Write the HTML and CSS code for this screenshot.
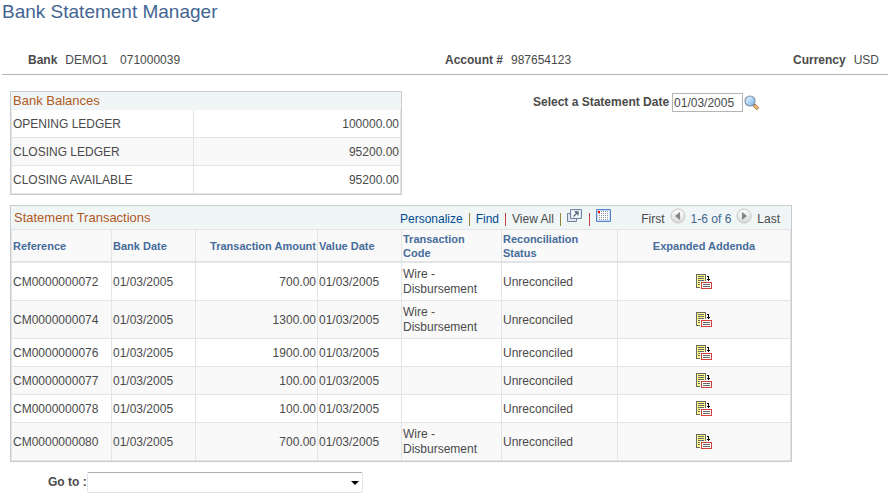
FILE: index.html
```html
<!DOCTYPE html>
<html lang="en">
<head>
<meta charset="utf-8">
<title>Bank Statement Manager</title>
<link rel="stylesheet" href="styles.css">
</head>
<body>
<svg class="sprite" aria-hidden="true">
  <symbol id="addenda" viewBox="0 0 16 16">
    <path fill="#666" d="M0 0h10v14H0z"/>
    <path fill="#ff8" d="M1 1h8v12H1z"/>
    <path fill="#666" d="M2 2h6v1H2zM2 4h6v1H2zM2 6h6v1H2zM2 8h3v1H2zM2 10h2v1H2z"/>
    <path fill="#000" d="M11 2h2v1h-2zM12 2h1v4h-1zM11 5h3v1h-3zM12 6h1v1h-1z"/>
    <path fill="#fff" d="M4 7h12v8H4z"/>
    <path fill="#d04040" d="M5 8h11v7H5z"/>
    <path fill="#fff" d="M6 9h9v5H6z"/>
    <path fill="#666" d="M7 10h7v1H7zM7 12h7v1H7z"/>
  </symbol>
</svg>
<main>
  <h1>Bank Statement Manager</h1>

  <dl class="summary">
    <div><dt>Bank</dt><dd>DEMO1</dd><dd class="routing">071000039</dd></div>
    <div><dt>Account #</dt><dd>987654123</dd></div>
    <div class="currency"><dt>Currency</dt><dd>USD</dd></div>
  </dl>

  <div class="top">
    <section class="panel balances">
      <h2>Bank Balances</h2>
      <table>
        <colgroup><col class="c-label"><col></colgroup>
        <tbody>
          <tr><td>OPENING LEDGER</td><td class="num">100000.00</td></tr>
          <tr><td>CLOSING LEDGER</td><td class="num">95200.00</td></tr>
          <tr><td>CLOSING AVAILABLE</td><td class="num">95200.00</td></tr>
        </tbody>
      </table>
    </section>
    <form class="picker">
      <label for="date">Select a Statement Date</label>
      <input id="date" type="text" value="01/03/2005">
      <button type="button" class="icon" aria-label="Look up date">
        <svg width="16" height="16" viewBox="0 0 16 16">
          <defs><linearGradient id="lens" x2="1" y2="1"><stop offset="0" stop-color="#f2fbff"/><stop offset="1" stop-color="#6fb4ee"/></linearGradient></defs>
          <path d="M9 9l1.500 1.500" stroke="#777" stroke-width="2"/>
          <path d="M10 10l4 4" stroke="#a8763f" stroke-width="3.600"/>
          <path d="M10.500 10.500l3 3" stroke="#f0b878" stroke-width="2.200"/>
          <circle cx="6" cy="6" r="5" fill="url(#lens)" stroke="#8593a8" stroke-width="1.200"/>
        </svg>
      </button>
    </form>
  </div>

  <section class="panel transactions">
    <div class="bar">
      <h2>Statement Transactions</h2>
      <div class="tools">
        <a href="#">Personalize</a><i></i><a href="#">Find</a><i class="red"></i><span>View All</span><i></i>
        <button type="button" class="icon" aria-label="Zoom grid">
          <svg width="16" height="14" viewBox="0 0 16 14">
            <path d="M.5 4.500h9v8h-9z" fill="#dfe5ea" stroke="#6f8193"/>
            <path d="M3.500 .5h11v9h-11z" fill="#fff" stroke="#7187a5"/>
            <path d="M4.500 1.500h9v7h-9z" fill="none" stroke="#dce8f5"/>
            <path d="M6.500 7.500l4-4M7.500 3h3.500v3.500" fill="none" stroke="#556879" stroke-width="1.300"/>
          </svg>
        </button><i class="red"></i>
        <button type="button" class="icon" aria-label="Download to spreadsheet">
          <svg width="15" height="13" viewBox="0 0 15 13">
            <path d="M.5 .5h14v12H.5z" fill="#fff" stroke="#5783d0"/>
            <path d="M1.500 1.500h12v10h-12z" fill="none" stroke="#c4d8f5"/>
            <path d="M3 2.500h10M3 4.500h10M3 6.500h10M3 8.500h10M3 10.500h10" stroke="#8d94a5" stroke-dasharray="1 1"/>
            <path d="M2 2h2v2H2z" fill="#f00"/>
          </svg>
        </button>
      </div>
      <div class="pager">
        <span>First</span>
        <button type="button" class="icon" aria-label="Previous rows">
          <svg width="16" height="16" viewBox="0 0 16 16"><defs><linearGradient id="disc" x2="0" y2="1"><stop offset="0" stop-color="#fff"/><stop offset="1" stop-color="#d8d8d8"/></linearGradient></defs><circle cx="8" cy="8" r="7" fill="url(#disc)" stroke="#c4c4c4"/><path d="M10 4v8L5 8z" fill="#858585"/></svg>
        </button>
        <span class="range">1-6 of 6</span>
        <button type="button" class="icon" aria-label="Next rows">
          <svg width="16" height="16" viewBox="0 0 16 16"><circle cx="8" cy="8" r="7" fill="url(#disc)" stroke="#c4c4c4"/><path d="M6 4v8l5-4z" fill="#858585"/></svg>
        </button>
        <span>Last</span>
      </div>
    </div>
    <table>
      <colgroup><col class="c-ref"><col class="c-date"><col class="c-amt"><col class="c-date"><col class="c-code"><col class="c-status"><col></colgroup>
      <thead>
        <tr><th>Reference</th><th>Bank Date</th><th class="num">Transaction Amount</th><th>Value Date</th><th>Transaction<br>Code</th><th>Reconciliation<br>Status</th><th class="mid">Expanded Addenda</th></tr>
      </thead>
      <tbody>
        <tr><td>CM0000000072</td><td>01/03/2005</td><td class="num">700.00</td><td>01/03/2005</td><td>Wire -<br>Disbursement</td><td>Unreconciled</td><td class="mid"><button type="button" class="icon" aria-label="Addenda"><svg width="16" height="16"><use href="#addenda"/></svg></button></td></tr>
        <tr><td>CM0000000074</td><td>01/03/2005</td><td class="num">1300.00</td><td>01/03/2005</td><td>Wire -<br>Disbursement</td><td>Unreconciled</td><td class="mid"><button type="button" class="icon" aria-label="Addenda"><svg width="16" height="16"><use href="#addenda"/></svg></button></td></tr>
        <tr><td>CM0000000076</td><td>01/03/2005</td><td class="num">1900.00</td><td>01/03/2005</td><td></td><td>Unreconciled</td><td class="mid"><button type="button" class="icon" aria-label="Addenda"><svg width="16" height="16"><use href="#addenda"/></svg></button></td></tr>
        <tr><td>CM0000000077</td><td>01/03/2005</td><td class="num">100.00</td><td>01/03/2005</td><td></td><td>Unreconciled</td><td class="mid"><button type="button" class="icon" aria-label="Addenda"><svg width="16" height="16"><use href="#addenda"/></svg></button></td></tr>
        <tr><td>CM0000000078</td><td>01/03/2005</td><td class="num">100.00</td><td>01/03/2005</td><td></td><td>Unreconciled</td><td class="mid"><button type="button" class="icon" aria-label="Addenda"><svg width="16" height="16"><use href="#addenda"/></svg></button></td></tr>
        <tr><td>CM0000000080</td><td>01/03/2005</td><td class="num">700.00</td><td>01/03/2005</td><td>Wire -<br>Disbursement</td><td>Unreconciled</td><td class="mid"><button type="button" class="icon" aria-label="Addenda"><svg width="16" height="16"><use href="#addenda"/></svg></button></td></tr>
      </tbody>
    </table>
  </section>

  <form class="goto">
    <label for="goto">Go to :</label>
    <span class="select"><select id="goto"><option></option></select><svg width="8" height="4" viewBox="0 0 8 4"><path d="M0 0h8L4 4z"/></svg></span>
  </form>
</main>
</body>
</html>
```
FILE: styles.css
```css
* { box-sizing: border-box; }
body {
  margin: 0;
  background: #fff;
  color: #4a4a4a;
  font: 12px/15px "Liberation Sans", Arial, sans-serif;
}
h1, h2, dl, dd { margin: 0; font-weight: normal; }
.sprite { display: none; }
svg { display: block; }
main { padding: 0 4px 0 2px; }
h1 { color: #426591; font-size: 19px; line-height: 24px; }
h2 { color: #b1591f; font-size: 13px; line-height: 18px; }
a { color: #004b91; text-decoration: none; }
dt, label { font-weight: bold; }
.icon { display: block; padding: 0; border: 0; background: none; }

.summary {
  display: grid;
  grid-template-columns: 49% auto auto;
  margin-top: 24px;
  padding: 5px 9px 6px 26px;
  border-bottom: 1px solid #b5b5b5;
}
.summary div { display: flex; gap: 8px; }
.summary .routing { margin-left: 4px; }
.summary .currency { justify-content: flex-end; }

.top { display: flex; align-items: flex-start; margin: 16px 0 10px 8px; }
.panel { border: 1px solid #c9cbd1; background: #f0f5f6; max-width: 100%; }
.balances { flex: 0 1 392px; margin-right: 131px; }
.balances h2 { padding-left: 2px; }

table { width: 100%; table-layout: fixed; border-collapse: separate; border-spacing: 0; background: #fff; border-left: 1px solid #e2e4e5; }
td, th {
  padding: 0 1px;
  border-right: 1px solid #e2e4e5;
  border-bottom: 1px solid #e2e4e5;
  text-align: left;
}
td { height: 28px; padding-top: 1px; }
tbody tr:nth-child(even), thead { background: #f9f9f9; }
th { height: 34px; border-top: 1px solid #e2e4e5; border-bottom-width: 2px; color: #466c99; font-size: 11px; line-height: 14px; }
.num { text-align: right; }
.mid { text-align: center; }
.mid .icon { margin: 0 auto; }

.picker { display: flex; align-items: center; padding-top: 2px; }
.picker input {
  width: 71px;
  height: 19px;
  margin: 0 1px 0 3px;
  padding: 0 1px;
  border: 1px solid #b5b5b5;
  color: inherit;
  font: inherit;
}

.transactions { width: 782px; margin-left: 8px; }
.transactions td:has(br) { height: 38px; }
.bar { display: flex; align-items: center; height: 23px; padding: 0 11px 0 3px; }
.bar h2 { width: 386px; }
.tools, .pager { display: flex; align-items: center; height: 23px; }
.tools i { height: 13px; margin: 3px 6px 0; border-left: 1px solid #99833b; }
.tools i.red { border-color: #c94040; }
.tools a, .tools span, .pager span { padding-top: 4px; }
.pager { gap: 5px; margin-left: auto; }
.tools .icon, .pager .icon { padding-bottom: 4px; }
.range { color: #426591; }
.c-label { width: 182px; }
.c-ref { width: 100px; }
.c-date { width: 84px; }
.c-amt { width: 122px; }
.c-code { width: 100px; }
.c-status { width: 116px; }

.goto { display: flex; align-items: center; margin: 10px 0 0 46px; }
.select { position: relative; width: 276px; }
.select select {
  display: block;
  width: 100%;
  height: 21px;
  border: 1px solid #e3e3eb;
  border-top-color: #abadb3;
  border-radius: 2px;
  background: #fff;
  appearance: none;
}
.select svg { position: absolute; right: 4px; top: 9px; pointer-events: none; }
```
